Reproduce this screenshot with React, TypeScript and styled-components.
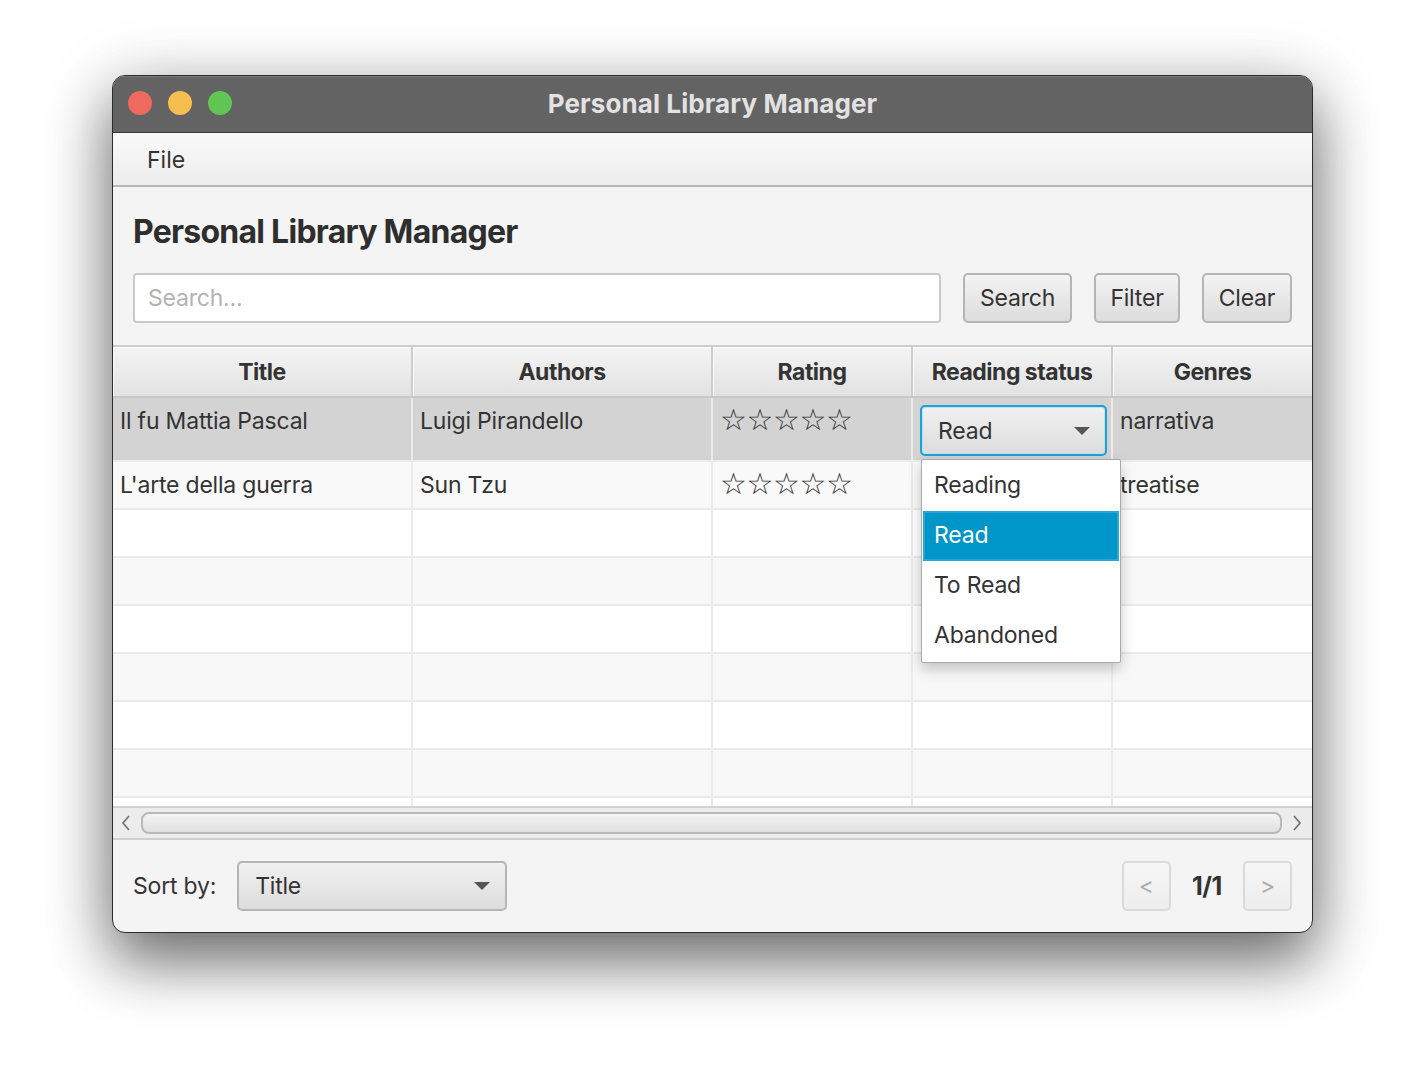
import React from "react";
import styled, { createGlobalStyle } from "styled-components";

const Global = createGlobalStyle`
  html, body { margin: 0; padding: 0; background: #ffffff; }
  body { font-family: Inter, "Noto Sans", "Liberation Sans", sans-serif; color: #333; }
  * { box-sizing: border-box; }
`;

const Page = styled.div`
  width: 1424px;
  height: 1080px;
  padding: 75px 0 0 112px;
  background: #fff;
`;

const Window = styled.div`
  width: 1201px;
  height: 858px;
  border: 1px solid #2b2b2b;
  border-radius: 13px;
  overflow: hidden;
  display: flex;
  flex-direction: column;
  background: #f4f4f4;
  box-shadow: 0 30px 60px rgba(0, 0, 0, 0.48), 0 10px 70px rgba(0, 0, 0, 0.22);
`;

const TitleBar = styled.div`
  height: 57px;
  flex: none;
  background: #636363;
  border-bottom: 1px solid #3a3a3a;
  box-shadow: inset 0 1px 0 #7a7a7a;
  position: relative;
  display: flex;
  align-items: center;
  justify-content: center;
  padding-bottom: 2px;
`;

const Lights = styled.div`
  position: absolute;
  left: 15px;
  top: 15px;
  display: flex;
  gap: 16px;
`;

const Light = styled.span<{ $c: string }>`
  width: 24px;
  height: 24px;
  border-radius: 50%;
  background: ${(p) => p.$c};
`;

const WinTitle = styled.div`
  font-weight: 700;
  font-size: 26px;
  color: #e2e2e2;
  letter-spacing: 0.1px;
`;

const MenuBar = styled.div`
  height: 54px;
  flex: none;
  background: linear-gradient(#fafafa, #ececec);
  border-bottom: 2px solid #b8b8b8;
  display: flex;
  align-items: center;
  padding: 2px 0 0 34px;
  font-size: 23px;
  color: #333;
`;

const Top = styled.div`
  padding: 25px 20px 22px 20px;
  display: flex;
  flex-direction: column;
  gap: 21px;
`;

const Heading = styled.h1`
  margin: 0;
  font-size: 32px;
  line-height: 40px;
  font-weight: 700;
  letter-spacing: -0.75px;
  color: #2e2e2e;
`;

const SearchRow = styled.div`
  display: flex;
  gap: 22px;
  height: 50px;
`;

const SearchInput = styled.div`
  flex: 1;
  background: #fff;
  border: 2px solid #c9c9c9;
  border-radius: 4px;
  display: flex;
  align-items: center;
  padding-left: 13px;
  font-size: 23px;
  letter-spacing: -0.2px;
  color: #b3b3b3;
`;

const Button = styled.div<{ $w: number }>`
  width: ${(p) => p.$w}px;
  background: linear-gradient(#f3f3f3, #dcdcdc);
  border: 2px solid #b5b5b5;
  border-radius: 5px;
  display: flex;
  align-items: center;
  justify-content: center;
  font-size: 23px;
  letter-spacing: -0.2px;
  color: #333;
`;

const TableWrap = styled.div`
  border-top: 2px solid #cdcdcd;
  display: flex;
  flex-direction: column;
`;

const cols = "300px 300px 200px 200px 1fr";

const HeaderRow = styled.div`
  display: grid;
  grid-template-columns: ${cols};
  height: 51px;
  border-bottom: 2px solid #c8c8c8;
`;

const HeaderCell = styled.div`
  background: linear-gradient(#f4f4f4, #e2e2e2);
  border-right: 2px solid #cdcdcd;
  box-shadow: inset 1px 1px 0 #fafafa;
  display: flex;
  align-items: center;
  justify-content: center;
  font-size: 23px;
  font-weight: 700;
  letter-spacing: -0.5px;
  color: #333;
  &:last-child { border-right: none; }
`;

const Body = styled.div`
  height: 408px;
  overflow: hidden;
  position: relative;
  display: flex;
  flex-direction: column;
`;

const Row = styled.div<{ $bg: string; $h: number }>`
  display: grid;
  grid-template-columns: ${cols};
  height: ${(p) => p.$h}px;
  flex: none;
  background: ${(p) => p.$bg};
  border-bottom: 2px solid #ebebeb;
`;

const Cell = styled.div`
  border-right: 2px solid #ebebeb;
  padding: 9px 0 0 7px;
  font-size: 23px;
  line-height: 28px;
  color: #333;
  letter-spacing: -0.2px;
  position: relative;
  white-space: nowrap;
  &:last-child { border-right: none; }
`;

const Stars = styled.span`
  font-family: "DejaVu Sans", sans-serif;
  font-size: 30px;
  line-height: 26px;
  letter-spacing: -0.4px;
  color: #333;
`;

const Combo = styled.div<{ $w: number; $focus?: boolean }>`
  width: ${(p) => p.$w}px;
  height: 50px;
  background: linear-gradient(#f1f1f1, #dcdcdc);
  border: 2px solid ${(p) => (p.$focus ? "#1fa0d8" : "#b5b5b5")};
  box-shadow: ${(p) => (p.$focus ? "inset 0 0 0 1px #bfe0ee" : "none")};
  border-radius: 5px;
  display: flex;
  align-items: center;
  justify-content: space-between;
  padding: 0 15px 0 16px;
  font-size: 23px;
  color: #333;
  letter-spacing: -0.2px;
`;

const CellCombo = styled(Combo)`
  position: absolute;
  left: 7px;
  top: 7px;
  height: 51px;
`;

const Arrow = styled.span`
  width: 0;
  height: 0;
  border-left: 8px solid transparent;
  border-right: 8px solid transparent;
  border-top: 8px solid #555;
`;

const Popup = styled.div`
  position: absolute;
  left: 8px;
  top: 61px;
  width: 200px;
  background: #fff;
  border: 1px solid #a9a9a9;
  border-radius: 2px;
  box-shadow: 0 6px 14px rgba(0, 0, 0, 0.22);
  z-index: 10;
  padding: 1px 0;
`;

const PopItem = styled.div<{ $sel?: boolean }>`
  height: 50px;
  display: flex;
  align-items: center;
  padding-left: 11px;
  font-size: 23px;
  letter-spacing: -0.2px;
  color: ${(p) => (p.$sel ? "#fff" : "#333")};
  background: ${(p) => (p.$sel ? "#0096c9" : "transparent")};
  box-shadow: ${(p) => (p.$sel ? "inset 0 0 0 2px #2aa7d4" : "none")};
  margin: 0 1px;
  padding-bottom: 2px;
`;

const ScrollBar = styled.div`
  height: 34px;
  background: #ececec;
  border-top: 2px solid #d2d2d2;
  border-bottom: 2px solid #cfcfcf;
  display: flex;
  align-items: center;
  gap: 6px;
  padding: 0 6px 0 4px;
`;

const ScrollArrow = styled.span`
  width: 18px;
  display: flex;
  justify-content: center;
  color: #777;
`;

const Thumb = styled.div`
  flex: 1;
  height: 22px;
  border: 2px solid #b9b9b9;
  border-radius: 8px;
  background: linear-gradient(#f4f4f4, #e0e0e0);
`;

const Footer = styled.div`
  flex: 1;
  display: flex;
  align-items: center;
  justify-content: space-between;
  padding: 0 20px;
`;

const SortGroup = styled.div`
  display: flex;
  align-items: center;
  gap: 21px;
  font-size: 23px;
  letter-spacing: -0.2px;
  color: #333;
`;

const Pager = styled.div`
  display: flex;
  align-items: center;
  gap: 21px;
`;

const PageBtn = styled.div`
  width: 49px;
  height: 50px;
  border: 2px solid #dadada;
  border-radius: 5px;
  background: linear-gradient(#f6f6f6, #ededed);
  display: flex;
  align-items: center;
  justify-content: center;
  font-size: 23px;
  color: #ababab;
`;

const PageNum = styled.span`
  font-size: 25px;
  font-weight: 700;
  letter-spacing: -0.4px;
  color: #333;
`;

const Chevron = ({ dir }: { dir: "l" | "r" }) => (
  <svg width="10" height="18" viewBox="0 0 10 18">
    <path
      d={dir === "l" ? "M8 2 L2 9 L8 16" : "M2 2 L8 9 L2 16"}
      fill="none"
      stroke="#777"
      strokeWidth="1.8"
    />
  </svg>
);

const rowBgs = ["#ffffff", "#f8f8f8"];

export default function App() {
  const empty = Array.from({ length: 7 });
  return (
    <>
      <Global />
      <Page>
        <Window>
          <TitleBar>
            <Lights>
              <Light $c="#ee6a5f" />
              <Light $c="#f5be4f" />
              <Light $c="#61c554" />
            </Lights>
            <WinTitle>Personal Library Manager</WinTitle>
          </TitleBar>
          <MenuBar>File</MenuBar>
          <Top>
            <Heading>Personal Library Manager</Heading>
            <SearchRow>
              <SearchInput>Search...</SearchInput>
              <Button $w={109}>Search</Button>
              <Button $w={86}>Filter</Button>
              <Button $w={90}>Clear</Button>
            </SearchRow>
          </Top>
          <TableWrap>
            <HeaderRow>
              <HeaderCell>Title</HeaderCell>
              <HeaderCell>Authors</HeaderCell>
              <HeaderCell>Rating</HeaderCell>
              <HeaderCell>Reading status</HeaderCell>
              <HeaderCell>Genres</HeaderCell>
            </HeaderRow>
            <Body>
              <Row $bg="#d3d3d3" $h={64}>
                <Cell>Il fu Mattia Pascal</Cell>
                <Cell>Luigi Pirandello</Cell>
                <Cell>
                  <Stars>☆☆☆☆☆</Stars>
                </Cell>
                <Cell>
                  <CellCombo $w={187} $focus>
                    Read
                    <Arrow />
                  </CellCombo>
                  <Popup>
                    <PopItem>Reading</PopItem>
                    <PopItem $sel>Read</PopItem>
                    <PopItem>To Read</PopItem>
                    <PopItem>Abandoned</PopItem>
                  </Popup>
                </Cell>
                <Cell>narrativa</Cell>
              </Row>
              <Row $bg="#f9f9f9" $h={48}>
                <Cell>L'arte della guerra</Cell>
                <Cell>Sun Tzu</Cell>
                <Cell>
                  <Stars>☆☆☆☆☆</Stars>
                </Cell>
                <Cell />
                <Cell>treatise</Cell>
              </Row>
              {empty.map((_, i) => (
                <Row key={i} $bg={rowBgs[i % 2]} $h={48}>
                  <Cell />
                  <Cell />
                  <Cell />
                  <Cell />
                  <Cell />
                </Row>
              ))}
            </Body>
            <ScrollBar>
              <ScrollArrow>
                <Chevron dir="l" />
              </ScrollArrow>
              <Thumb />
              <ScrollArrow>
                <Chevron dir="r" />
              </ScrollArrow>
            </ScrollBar>
          </TableWrap>
          <Footer>
            <SortGroup>
              Sort by:
              <Combo $w={270}>
                Title
                <Arrow />
              </Combo>
            </SortGroup>
            <Pager>
              <PageBtn>&lt;</PageBtn>
              <PageNum>1/1</PageNum>
              <PageBtn>&gt;</PageBtn>
            </Pager>
          </Footer>
        </Window>
      </Page>
    </>
  );
}
